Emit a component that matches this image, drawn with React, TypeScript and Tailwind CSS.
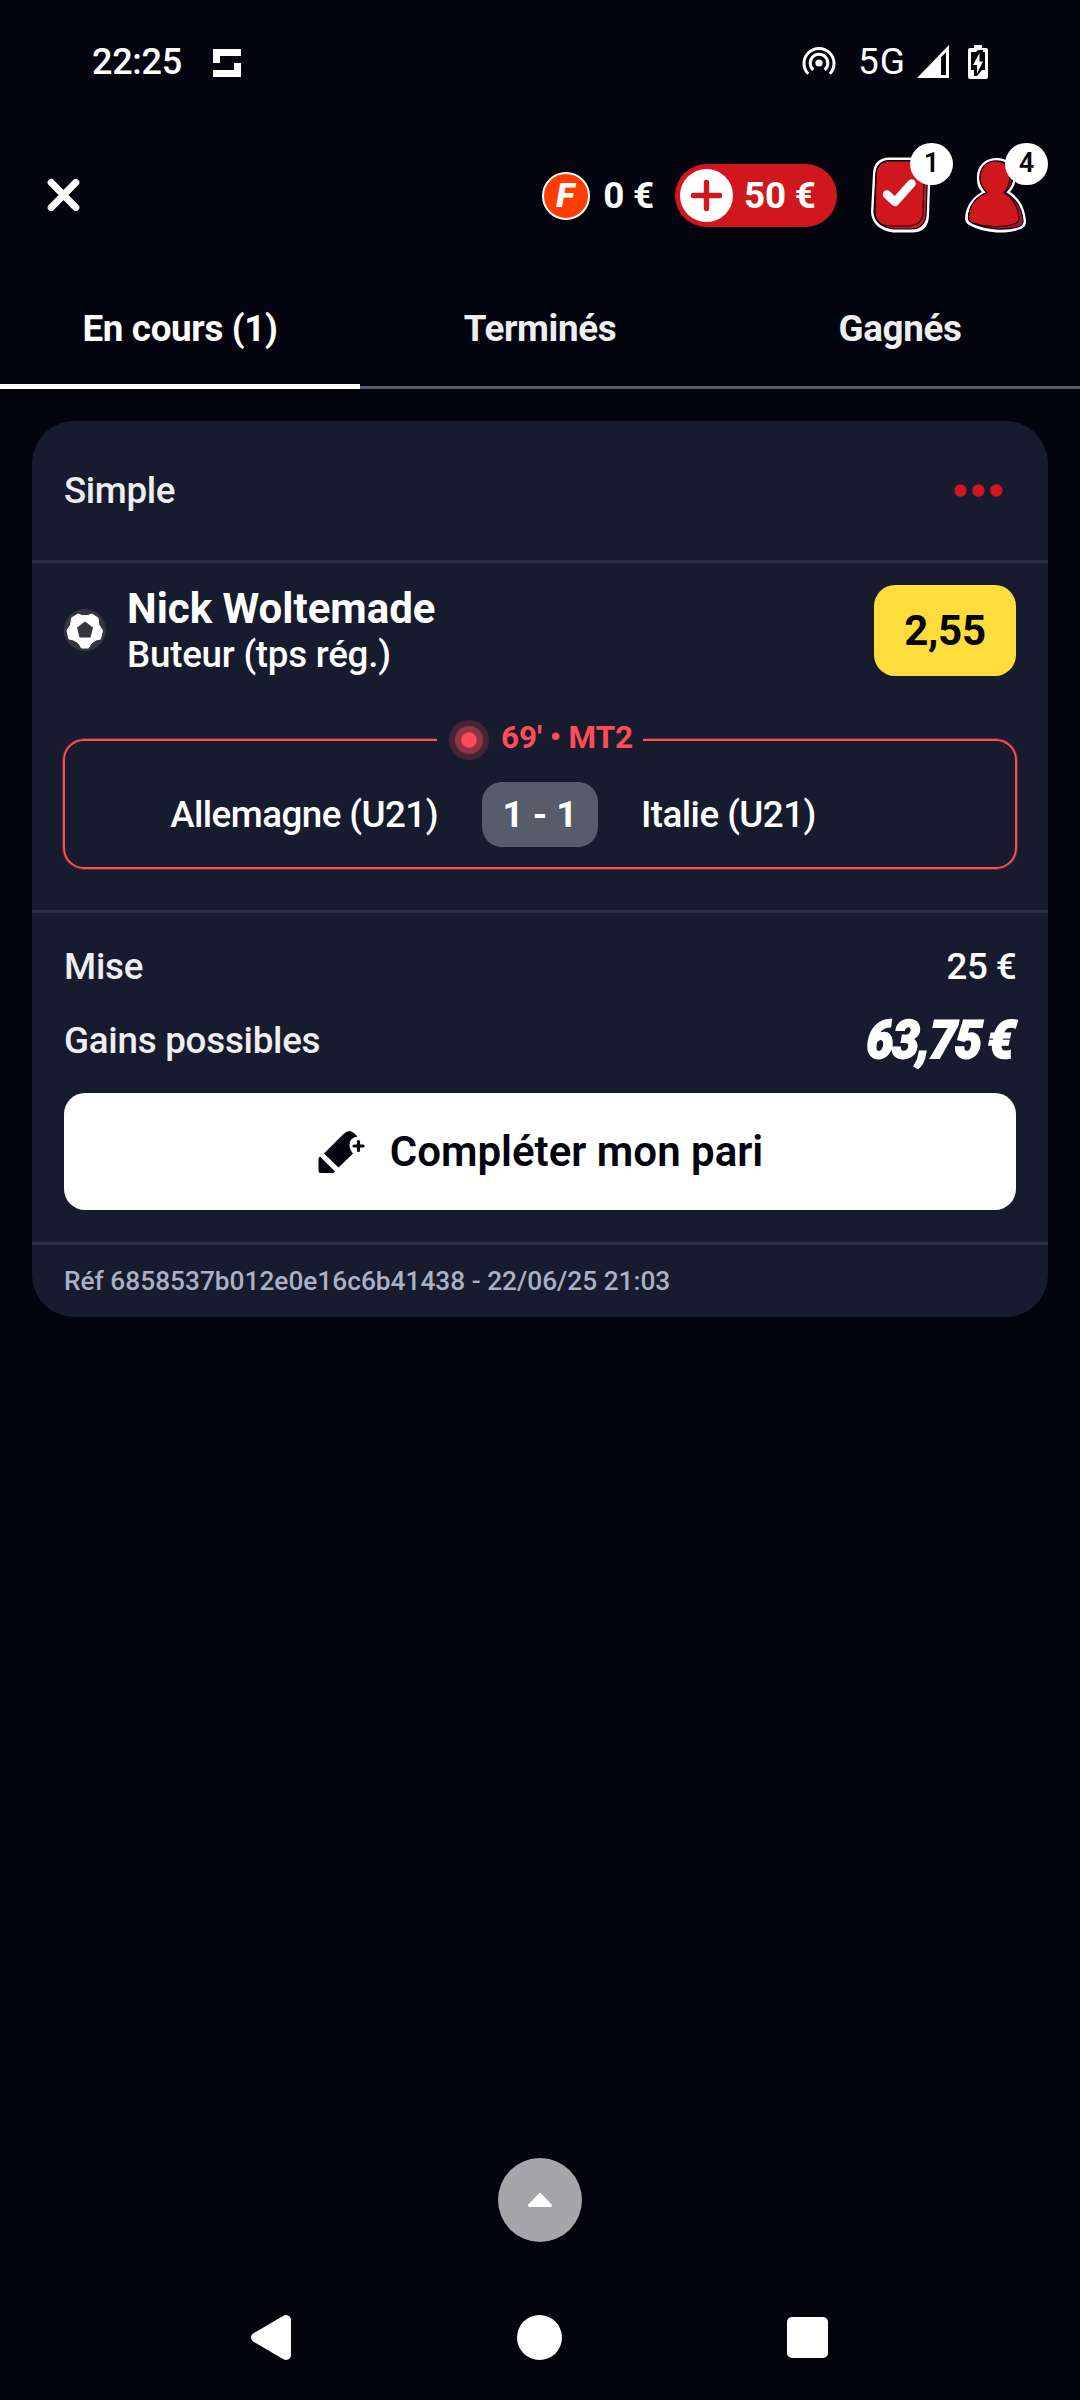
import type { ReactNode } from "react"

const tabs = [
  { label: "En cours (1)", active: true },
  { label: "Terminés", active: false },
  { label: "Gagnés", active: false },
]

function Badge({ children }: { children: ReactNode }) {
  return (
    <span className="absolute -top-4 left-10 flex h-[42px] w-[43px] items-center justify-center rounded-full bg-white text-[27px] font-semibold text-[#04040f]">
      {children}
    </span>
  )
}

function StatusBar() {
  return (
    <div className="flex h-[123px] items-center pl-[92px] pr-[92px] text-[36px] font-medium">
      <span className="tracking-[-0.3px]">22:25</span>
      <svg className="ml-[31px] mt-[3px]" width="28" height="28" viewBox="0 0 28 28" fill="#fff">
        <path d="M0 0H28V7H7V14H0Z" />
        <path d="M28 28H0V21H21V14H28Z" />
      </svg>
      <svg className="-mt-[2px] ml-auto" width="34" height="34" viewBox="0 0 34 34" fill="none" stroke="#fff" strokeWidth="3">
        <circle cx="17" cy="19" r="3.6" fill="#fff" stroke="none" />
        <path d="M11.3 25.8A8.8 8.8 0 1 1 22.7 25.8" />
        <path d="M6.2 29.8A15 15 0 1 1 27.8 29.8" />
      </svg>
      <span className="ml-[22px] w-[48px] text-[37px] font-normal tracking-[1px]">5G</span>
      <svg className="ml-[11px]" width="32" height="33" viewBox="0 0 32 33">
        <path d="M32 0V33H0Z" fill="#fff" />
        <path d="M24 12L29 7.500V30H24Z" fill="#04040f" />
      </svg>
      <svg className="ml-[19px]" width="20" height="34" viewBox="0 0 20 34">
        <path d="M6 0H14V3H18Q20 3 20 5V32Q20 34 18 34H2Q0 34 0 32V5Q0 3 2 3H6Z" fill="#fff" />
        <path d="M10 5H15V7H17V25H14L9 31H6V25H3V7H8Z" fill="#04040f" />
        <path d="M11.5 8L5 20H9V28.5L15 16.5H11.5Z" fill="#fff" />
      </svg>
    </div>
  )
}

function Header() {
  return (
    <header className="flex h-[145px] items-center pl-[47px] pr-[53px] text-[36.75px] font-bold">
      <svg className="-mt-[2px]" width="33" height="34" viewBox="0 0 33 34" stroke="#fff" strokeWidth="7" strokeLinecap="round">
        <path d="M4.2 4.500L28.800 29.500M28.800 4.500L4.200 29.500" />
      </svg>
      <span className="ml-auto flex h-[48px] w-[48px] items-center justify-center rounded-full border-[2.5px] border-white bg-[#ff3d00] pr-[2px] text-[34px] font-black italic">
        F
      </span>
      <span className="ml-[13px] tracking-[-0.2px]">0 €</span>
      <div className="ml-[21px] flex h-[63px] w-[162px] items-center rounded-full bg-[#d1171e] pl-[5px]">
        <svg width="53" height="53" viewBox="0 0 53 53">
          <circle cx="26.5" cy="26.5" r="26.5" fill="#fff" />
          <path d="M26.5 13.5V39.5M13.5 26.5H39.5" stroke="#d1171e" strokeWidth="5.4" strokeLinecap="round" />
        </svg>
        <span className="ml-[11px] tracking-[-0.2px]">50 €</span>
      </div>
      <div className="relative ml-[33px]">
        <svg className="-mt-[2px]" width="61" height="76" viewBox="0 0 61 76" fill="none">
          <path d="M19 0.500H46Q61 1 60.500 17L59 59Q58 75.500 42 75.500H23Q2 72 1 55L3 16Q4 1 19 0.500Z" fill="#fff" />
          <path d="M19 3.500H46Q58 4 57.500 17L56 59Q54 72 41 72H23Q5 69 4 55L6 17Q7 4 19 3.500Z" fill="#d1171e" stroke="#04040f" strokeWidth="1.200" />
          <path d="M19 4H40Q54.500 4 54 18L53 56Q52 68 39 69H19Q5 68 5 54L6 17Q7 5 19 4Z" fill="#d1171e" stroke="#04040f" strokeWidth="1.200" />
          <path d="M17 37.500L25 45L41.500 26.500" stroke="#fff" strokeWidth="8.500" strokeLinecap="round" strokeLinejoin="round" />
        </svg>
        <Badge>1</Badge>
      </div>
      <div className="relative ml-[34px]">
        <svg className="-mt-[2px]" width="62" height="76" viewBox="0 0 62 76" fill="none">
          <path d="M32 1C19 1 11 10 12 22C12 28 14 32 17 35C8 40 1 48 0 61C0 65 2 67 6 69C20 76 40 78 56 72C60 70 61 68 61 64C60 50 54 41 45 35C49 30 51 25 51 19C50 8 42 1 32 1Z" fill="#fff" />
          <path d="M32 4C22 4 15 11 15 21C15 27 18 32 22 35.500C11 40 4 49 3.500 61C3.500 64 5 65 8 66.500C22 72.500 40 74 54 69.500C57 68.500 58 67 58 64C57 51 50 41 40.500 35.500C45 31 48 26 48 19C47 9 41 4 32 4Z" fill="#b90d28" stroke="#04040f" strokeWidth="1.200" />
          <path d="M30 4C21 4 15 11 15 21C15 27 18 32 22 35.500C11 40 4 49 3.500 61C3.500 64 5 65 8 66C20 70 38 71 49 67C53 66 54 64 54 61C53 50 48 41 39 35.500C43 31 45 26 45 19C45 9 39 4 30 4Z" fill="#d1171e" stroke="#04040f" strokeWidth="1.200" />
        </svg>
        <Badge>4</Badge>
      </div>
    </header>
  )
}

function Tabs() {
  return (
    <nav className="grid h-[121px] grid-cols-3 text-[36.75px] font-bold tracking-[-0.35px]">
      {tabs.map((tab) => (
        <div key={tab.label} className="relative flex items-center justify-center border-b-[3px] border-[#575d6b] pt-[3px]">
          <span className={tab.active ? "text-white" : "text-[#eeeef1]"}>{tab.label}</span>
          {tab.active && <span className="absolute inset-x-0 -bottom-[3px] h-[5px] bg-white" />}
        </div>
      ))}
    </nav>
  )
}

function BallIcon() {
  return (
    <svg width="42" height="42" viewBox="0 0 42 42">
      <circle cx="21" cy="21" r="21" fill="#35363f" />
      <path
        d="M14 5Q21 8.500 28 5L34 9Q33.500 16 38.500 21.500L36.500 30Q28 31 24.500 39H17.500Q14 31 5 30L3 21.500Q8 16 7.500 9Z"
        fill="#fff"
        stroke="#fff"
        strokeLinejoin="round"
      />
      <path d="M21 12.500L29 18.500L26.500 28.500H15.500L13 18.500Z" fill="#35363f" />
    </svg>
  )
}

function LiveMatch() {
  return (
    <div className="relative -mx-px mt-[63px] h-[130px] rounded-[21px] border-2 border-[#ff4d57] pt-[41px] text-[36.75px] font-medium shadow-[0_0_0_1px_rgba(255,77,87,0.3)]">
      <div className="absolute -top-[22px] left-[372px] flex h-[42px] w-[206px] items-center bg-[#161b2d] pl-[12px] text-[31.5px] font-bold tracking-[-0.1px] text-[#ff4d57]">
        <svg width="40" height="40" viewBox="0 0 40 40" fill="#ff4d57">
          <circle cx="20" cy="20" r="20" fillOpacity="0.2" />
          <circle cx="20" cy="20" r="14" fillOpacity="0.42" />
          <circle cx="20" cy="20" r="7.700" />
        </svg>
        <span className="-mt-[4px] ml-[12px] whitespace-nowrap">69' • MT2</span>
      </div>
      <div className="grid grid-cols-[1fr_116px_1fr] items-center gap-[44px] tracking-[-0.55px]">
        <span className="text-right">Allemagne (U21)</span>
        <span className="flex h-[65px] items-center justify-center rounded-[20px] bg-[#565c69] font-bold tracking-normal">1 - 1</span>
        <span className="-ml-px">Italie (U21)</span>
      </div>
    </div>
  )
}

function BetCard() {
  return (
    <section className="mx-8 mt-8 rounded-[42px] bg-[#161b2d] text-[36.75px] font-medium">
      <div className="flex h-[139px] items-center justify-between pl-8 pr-[45px] text-[#eeeef1]">
        <span className="tracking-[-0.4px]">Simple</span>
        <svg width="49" height="13" viewBox="0 0 49 13" fill="#d1171e">
          <circle cx="6.500" cy="6.500" r="6.200" />
          <circle cx="24.400" cy="6.500" r="6.200" />
          <circle cx="42.300" cy="6.500" r="6.200" />
        </svg>
      </div>

      <div className="border-t-[3px] border-[#2e3042] px-8 pb-[41px] pt-[21px]">
        <div className="flex h-[92px] items-center">
          <BallIcon />
          <div className="ml-[21px]">
            <p className="text-[42px] font-bold leading-[49px]">Nick Woltemade</p>
            <p className="leading-[43px] tracking-[-0.25px]">Buteur (tps rég.)</p>
          </div>
          <span className="ml-auto flex h-[91px] w-[142px] items-center justify-center rounded-[21px] bg-[#fddc3b] text-[42px] font-bold tracking-[-0.3px] text-[#04040f]">
            2,55
          </span>
        </div>
        <LiveMatch />
      </div>

      <div className="border-t-[3px] border-[#2e3042] px-8 pb-8 pt-[17px]">
        <div className="flex h-[74px] items-center justify-between">
          <span className="tracking-[-0.2px] text-[#eeeef1]">Mise</span>
          <span className="tracking-[-0.6px]">25 €</span>
        </div>
        <div className="flex h-[74px] items-center justify-between">
          <span className="tracking-[-0.25px] text-[#eeeef1]">Gains possibles</span>
          <span className="mr-[3px] origin-right -skew-x-3 scale-x-[0.91] text-[53px] font-black italic tracking-[-1.5px] [-webkit-text-stroke:1.8px_white] [word-spacing:-4px]">
            63,75 €
          </span>
        </div>
        <button className="mt-[15px] flex h-[117px] w-full items-center justify-center rounded-[21px] bg-white pl-px text-[42px] font-semibold text-[#04040f]">
          <svg width="47" height="44" viewBox="0 0 47 44" fill="#04040f">
            <path d="M6 23.500L25 4.500Q31 -2 36.500 3.500L39.500 6.500Q31 8 31.500 16Q32 20.500 35 23.500L20.500 37.500Z" />
            <path d="M2 26.500L17 41.500Q16 43 14 43H3Q0.500 43 0.500 40.500V29Q0.500 27.500 2 26.500Z" />
            <path d="M40.500 11.500V20.500M36 16H45" stroke="#04040f" strokeWidth="3.200" strokeLinecap="round" />
          </svg>
          <span className="ml-[25px]">Compléter mon pari</span>
        </button>
      </div>

      <div className="flex h-[75px] items-center border-t-[3px] border-[#2e3042] px-8 pt-px text-[26.25px] text-[#a9b1c3]">
        Réf 6858537b012e0e16c6b41438 - 22/06/25 21:03
      </div>
    </section>
  )
}

function NavigationBar() {
  return (
    <div className="flex h-[125px] items-center pl-[250px]">
      <svg width="41" height="45" viewBox="0 0 41 45" fill="#fff" stroke="#fff" strokeWidth="10" strokeLinejoin="round">
        <path d="M6 22.500L36 5V40Z" />
      </svg>
      <span className="ml-[226px] h-[45px] w-[45px] rounded-full bg-white" />
      <span className="ml-[225px] h-[41px] w-[41px] rounded-[5px] bg-white" />
    </div>
  )
}

export default function App() {
  return (
    <main className="flex h-[2400px] w-[1080px] flex-col bg-[#04040f] font-['Roboto',sans-serif] text-white">
      <StatusBar />
      <Header />
      <Tabs />
      <BetCard />
      <button className="mx-auto mb-[33px] mt-auto flex h-[84px] w-[84px] items-center justify-center rounded-full bg-[#a6a5aa]">
        <svg width="26" height="16" viewBox="0 0 26 16" fill="#fff" stroke="#fff" strokeWidth="3" strokeLinejoin="round">
          <path d="M13 2.500L2.500 13.500H23.500Z" />
        </svg>
      </button>
      <NavigationBar />
    </main>
  )
}
